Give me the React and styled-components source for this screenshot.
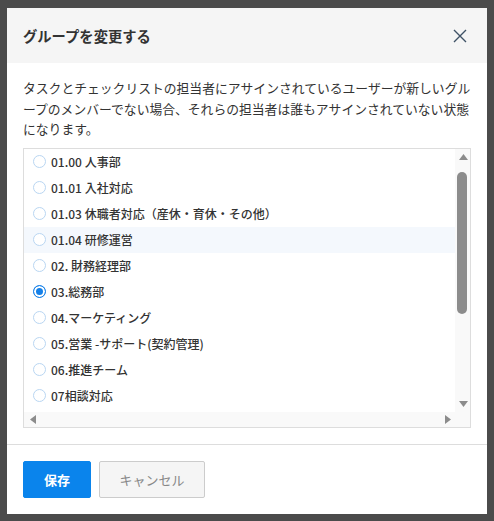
import React from 'react';
import styled, { createGlobalStyle } from 'styled-components';

const GlobalStyle = createGlobalStyle`
  html, body {
    margin: 0;
    padding: 0;
  }
  body {
    font-family: "Noto Sans CJK JP", "Noto Sans", sans-serif;
    color: #333;
  }
`;

const arrowColor = '#8c8c8c';
const trackColor = '#f9f9f9';

const Backdrop = styled.div`
  width: 494px;
  height: 521px;
  box-sizing: border-box;
  padding: 8px 7px 7px;
  background: #4b4b4b;
  overflow: hidden;
`;

const Modal = styled.div`
  width: 480px;
  height: 506px;
  background: #fff;
  display: flex;
  flex-direction: column;
`;

const Header = styled.div`
  height: 55px;
  flex: none;
  display: flex;
  align-items: center;
  justify-content: space-between;
  padding: 0 16px;
  background: #f5f5f5;
`;

const Title = styled.h2`
  margin: 0;
  font-size: 14.3px;
  font-weight: 700;
  color: #333;
`;

const CloseButton = styled.button`
  width: 22px;
  height: 22px;
  padding: 0;
  border: none;
  background: none;
  display: flex;
  align-items: center;
  justify-content: center;
  cursor: pointer;
`;

const Body = styled.div`
  padding: 15px 16px 16px;
`;

const Description = styled.p`
  margin: 0 0 8px;
  font-size: 12.8px;
  line-height: 20.5px;
  color: #333;
`;

const ListBox = styled.div`
  height: 280px;
  box-sizing: border-box;
  border: 1px solid #ddd;
  display: grid;
  grid-template-columns: 1fr 15px;
  grid-template-rows: 1fr 15px;
`;

const Viewport = styled.div`
  overflow: hidden;
`;

const VBar = styled.div`
  display: flex;
  flex-direction: column;
  background: ${trackColor};
`;

const HBar = styled.div`
  display: flex;
  background: ${trackColor};
`;

const Track = styled.div`
  flex: 1;
`;

const VThumb = styled.div`
  margin: 8px 3px 0 2px;
  height: 142px;
  border-radius: 5px;
  background: ${arrowColor};
`;

const Corner = styled.div`
  background: ${trackColor};
`;

const ArrowButton = styled.div`
  width: 15px;
  height: 15px;
  flex: none;
  display: flex;
  align-items: center;
  justify-content: center;
  padding: ${p => p.$pad || '0'};
  box-sizing: border-box;
`;

const Row = styled.label`
  height: 26px;
  display: flex;
  align-items: center;
  gap: 5px;
  padding-left: 9px;
  font-size: 12px;
  font-weight: 500;
  color: #333;
  white-space: nowrap;
  background: ${p => (p.$hover ? '#f4f8fd' : 'transparent')};
  cursor: pointer;
`;

const Radio = styled.span`
  width: 11px;
  height: 11px;
  flex: none;
  border-radius: 50%;
  border: 1px solid ${p => (p.$checked ? '#1580e8' : '#b9d6f2')};
  background: ${p => (p.$checked ? '#1580e8' : '#fff')};
  box-shadow: ${p => (p.$checked ? 'inset 0 0 0 2px #fff' : 'none')};
`;

const Footer = styled.div`
  border-top: 1px solid #ddd;
  padding: 16px;
  display: flex;
  gap: 8px;
`;

const Button = styled.button`
  height: 37px;
  padding: 0;
  width: ${p => (p.$primary ? '68px' : '106px')};
  border-radius: 2px;
  border: 1px solid ${p => (p.$primary ? '#0a84ec' : '#ccc')};
  background: ${p => (p.$primary ? '#0a84ec' : '#f5f5f5')};
  color: ${p => (p.$primary ? '#fff' : '#888')};
  font-family: inherit;
  font-size: 13px;
  font-weight: ${p => (p.$primary ? 700 : 400)};
  cursor: pointer;
`;

const groups = [
  '01.00 人事部',
  '01.01 入社対応',
  '01.03 休職者対応（産休・育休・その他）',
  '01.04 研修運営',
  '02. 財務経理部',
  '03.総務部',
  '04.マーケティング',
  '05.営業 -サポート(契約管理)',
  '06.推進チーム',
  '07相談対応',
  '08.システム部',
  '09.法務部',
  '10.広報',
  '11.カスタマーサクセス',
  '12.開発チーム',
  '13.品質管理',
];

const CloseIcon = () => (
  <svg width="14" height="14" viewBox="0 0 14 14">
    <path d="M1 1L13 13M13 1L1 13" stroke="#3f5266" strokeWidth="1.4" fill="none" />
  </svg>
);

// small scroll arrows: up, down, left, right
const arrowPoints = {
  up: { w: 9, h: 6, pts: '4.5,0 9,6 0,6' },
  down: { w: 9, h: 6, pts: '0,0 9,0 4.5,6' },
  left: { w: 6, h: 9, pts: '0,4.5 6,0 6,9' },
  right: { w: 6, h: 9, pts: '0,0 6,4.5 0,9' },
};

const Arrow = ({ dir }) => {
  const a = arrowPoints[dir];
  return (
    <svg width={a.w} height={a.h} viewBox={`0 0 ${a.w} ${a.h}`}>
      <polygon points={a.pts} fill={arrowColor} />
    </svg>
  );
};

export default function App() {
  const selected = '03.総務部';

  return (
    <>
      <GlobalStyle />
      <Backdrop>
        <Modal>
          <Header>
            <Title>グループを変更する</Title>
            <CloseButton aria-label="閉じる">
              <CloseIcon />
            </CloseButton>
          </Header>
          <Body>
            <Description>
              タスクとチェックリストの担当者にアサインされているユーザーが新しいグループのメンバーでない場合、それらの担当者は誰もアサインされていない状態になります。
            </Description>
            <ListBox>
              <Viewport>
                {groups.map((g, i) => (
                  <Row key={g} $hover={i === 3}>
                    <Radio $checked={g === selected} />
                    {g}
                  </Row>
                ))}
              </Viewport>
              <VBar>
                <ArrowButton $pad="2px 0 0 1px"><Arrow dir="up" /></ArrowButton>
                <Track>
                  <VThumb />
                </Track>
                <ArrowButton $pad="0 0 0 1px"><Arrow dir="down" /></ArrowButton>
              </VBar>
              <HBar>
                <ArrowButton $pad="0 0 0 2px"><Arrow dir="left" /></ArrowButton>
                <Track />
                <ArrowButton $pad="0 0 0 1px"><Arrow dir="right" /></ArrowButton>
              </HBar>
              <Corner />
            </ListBox>
          </Body>
          <Footer>
            <Button $primary>保存</Button>
            <Button>キャンセル</Button>
          </Footer>
        </Modal>
      </Backdrop>
    </>
  );
}
